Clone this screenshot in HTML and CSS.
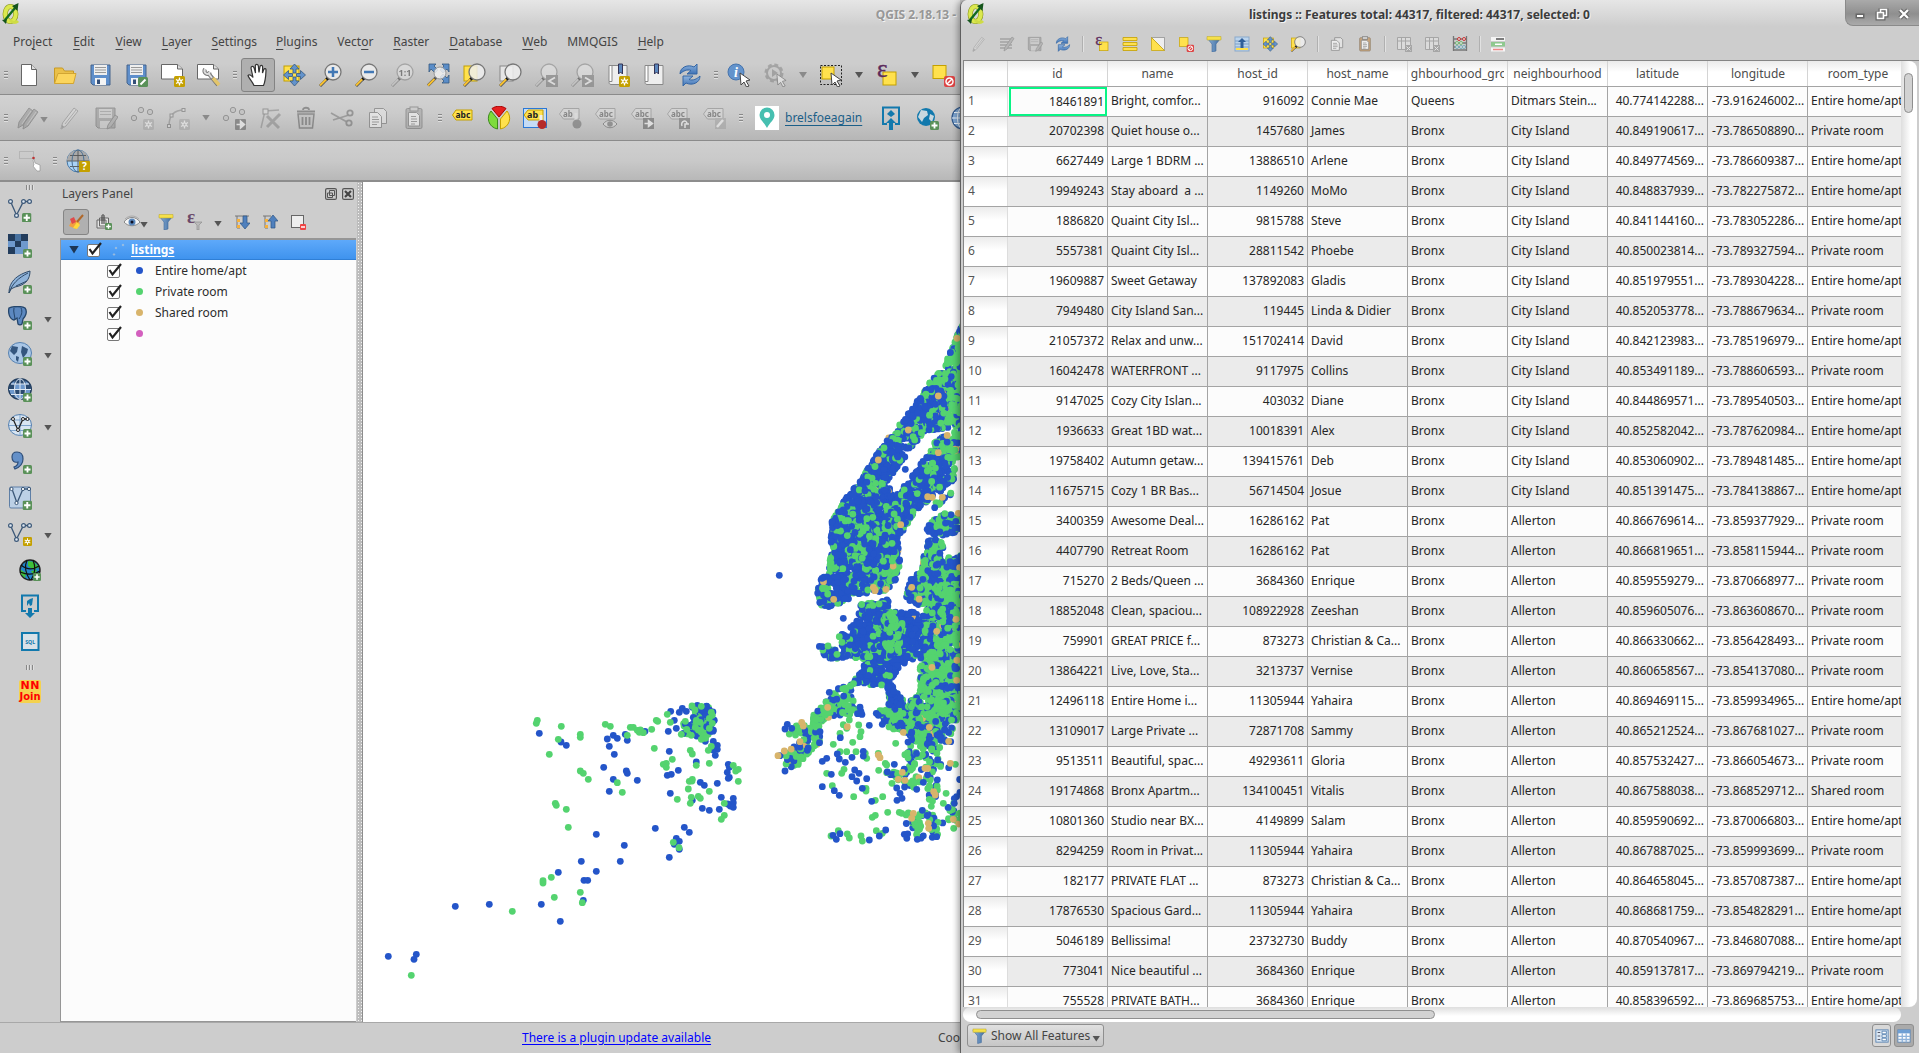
FILE: index.html
```html
<!DOCTYPE html>
<html lang="en">
<head>
<meta charset="utf-8">
<title>QGIS 2.18.13</title>
<link rel="stylesheet" href="styles.css">
</head>
<body>
<svg class="sprite" aria-hidden="true">
<defs>
<linearGradient id="gBlue" x1="0" y1="0" x2="0" y2="1"><stop offset="0" stop-color="#8fb4de"/><stop offset="1" stop-color="#3f72b5"/></linearGradient>
<linearGradient id="gFun" x1="0" y1="0" x2="1" y2="0"><stop offset="0" stop-color="#8ab0d8"/><stop offset="1" stop-color="#3c689c"/></linearGradient>
<symbol id="bplus" viewBox="0 0 9 9"><rect width="9" height="9" rx="1.5" fill="#5a9159"/><path d="M4.5 1.5v6M1.5 4.5h6" stroke="#fff" stroke-width="1.8"/></symbol>
<symbol id="bstar" viewBox="0 0 11 11"><rect width="11" height="11" rx="1.5" fill="#c4a000"/><path d="M5.500 1.500v8M2 3.500l7 4M9 3.500l-7 4" stroke="#fff" stroke-width="1.300"/><circle cx="5.500" cy="5.500" r="2.200" fill="#fff"/><circle cx="5.500" cy="5.500" r="1" fill="#c4a000"/></symbol>
<symbol id="lens" viewBox="0 0 24 24"><path d="M2 23l8-8" stroke="#555" stroke-width="3"/><path d="M2 22.500l6.500-6.500" stroke="#f7c02e" stroke-width="2"/><path d="M8.500 16.500l2-2" stroke="#111" stroke-width="3"/><circle cx="15" cy="9" r="8" fill="#eee" fill-opacity=".85" stroke="#777" stroke-width="1.300"/></symbol>
<symbol id="cursor" viewBox="0 0 12 15"><path d="M1 1l10 7-4 1 3 5-2.500 1-2.500-5-3 3z" fill="#fff" stroke="#444"/></symbol>
<symbol id="qgis" viewBox="0 0 18 22"><ellipse cx="8.500" cy="11" rx="5.300" ry="7.500" fill="none" stroke="#8d9a22" stroke-width="5.200"/><ellipse cx="8.500" cy="11" rx="5.300" ry="7.500" fill="none" stroke="#dbe84f" stroke-width="4"/><path d="M8 17c3 3 5 4 8 1" fill="none" stroke="#cfdc45" stroke-width="3"/><path d="M3 17L13 5" stroke="#126b20" stroke-width="2.400"/><path d="M16.500 0l-1 8-5.500-5zM0 17l5-1-1 5z" fill="#15551c"/></symbol>
<symbol id="new" viewBox="0 0 24 24"><path d="M4.500 1.500h10l5 5v16h-15z" fill="#fff" stroke="#666"/><path d="M14.500 1.500v5h5" fill="#ddd" stroke="#666"/></symbol>
<symbol id="open" viewBox="0 0 24 24"><path d="M1.500 20V5h8l2 3h9v12z" fill="#eac04a" stroke="#c79a25"/><path d="M1.500 20.500L5 10.500h18L20.500 20.500z" fill="#fbd55d" stroke="#d2a532"/></symbol>
<symbol id="save" viewBox="0 0 24 24"><path d="M2 2h19v20H4l-2-2z" fill="#5f8fcb" stroke="#46658c"/><rect x="5" y="2" width="13" height="10" fill="#eee"/><path d="M6 4.500h11M6 7h11M6 9.500h11" stroke="#999"/><rect x="6" y="15" width="11" height="7" fill="#f4f4f4"/><rect x="8" y="16.500" width="3" height="4.500" fill="#344f78"/></symbol>
<symbol id="saveas" viewBox="0 0 24 24"><use href="#save"/><rect x="13" y="14" width="10" height="10" rx="1.500" fill="#5a9159"/><path d="M15.500 21.500l5-5" stroke="#fff" stroke-width="2"/></symbol>
<symbol id="newcomp" viewBox="0 0 24 24"><path d="M.5 1.500h16l5 4.500v10H.5z" fill="#fff" stroke="#666"/><path d="M16.500 1.500v4.500h5" fill="#ddd" stroke="#666"/><use href="#bstar" x="13" y="13" width="11" height="11"/></symbol>
<symbol id="compman" viewBox="0 0 24 24"><path d="M.5 1.500h16l5 4.500v10H.5z" fill="#fff" stroke="#666"/><path d="M16.500 1.500v4.500h5" fill="#ddd" stroke="#666"/><path d="M8 6c-2 4 3 7 5 3M12 11l9 11" stroke="#777" stroke-width="4" fill="none"/><path d="M8 6c-2 4 3 7 5 3M12 11l3 4" stroke="#ddd" stroke-width="2" fill="none"/><path d="M16 15l6 7" stroke="#e3c56a" stroke-width="3.500"/></symbol>
<symbol id="pan" viewBox="0 0 24 24"><path d="M8 22.500C6 18 3 15.500 2 12.500c1-1.500 3-.5 5 2L5 5c0-2 2.400-2.200 3-.3L9.500 10 9.300 2.800c.2-2 2.600-2 3 0L13 9.500l1-6c.4-1.700 2.500-1.500 2.600.3L16.500 10l1.300-3.500c.6-1.500 2.300-1 2.200.5-.2 5-.2 10-2.500 15.500z" fill="#fff" stroke="#333" stroke-width="1.200"/></symbol>
<symbol id="pansel" viewBox="0 0 24 24"><rect x="2" y="3" width="15" height="15" fill="#ffe14d" stroke="#c4a000"/><g fill="#6393cc" stroke="#36597f" stroke-width=".8"><path d="M12.500 1l4.500 5h-3v4h-3V6H8zM12.500 23l4.500-5h-3v-4h-3v4H8zM1.500 12l5-4.500v3h4v3h-4v3zM23.500 12l-5-4.500v3h-4v3h4v3z"/></g></symbol>
<symbol id="zin" viewBox="0 0 24 24"><use href="#lens"/><path d="M15 4v10M10 9h10" stroke="#4278b5" stroke-width="2.500"/></symbol>
<symbol id="zout" viewBox="0 0 24 24"><use href="#lens"/><path d="M10 9h10" stroke="#4278b5" stroke-width="2.500"/></symbol>
<symbol id="z11" viewBox="0 0 24 24"><use href="#lens"/><text x="15" y="12.500" class="icon-text" font-size="9" text-anchor="middle" fill="#222">1:1</text></symbol>
<symbol id="zfull" viewBox="0 0 24 24"><path d="M3 1h7L8 3l4 4-3 3-4-4-2 3zM23 1h-7l2 2-4 4 3 3 4-4 2 3zM23 20h-7l2-2-4-4 3-3 4 4 2-3z" fill="#5a8dc8" stroke="#36597f" stroke-width=".8"/><path d="M2 22.500l8-8" stroke="#555" stroke-width="3"/><path d="M2 22.500l6.500-6.500" stroke="#f7c02e" stroke-width="2"/><circle cx="14" cy="10" r="6" fill="#eee" fill-opacity=".85" stroke="#999"/></symbol>
<symbol id="zsel" viewBox="0 0 24 24"><rect x="2" y="3" width="13" height="15" fill="#ffe14d" stroke="#c4a000"/><use href="#lens"/></symbol>
<symbol id="zlay" viewBox="0 0 24 24"><rect x="2" y="3" width="13" height="15" fill="#e5e5e5" stroke="#888"/><use href="#lens"/></symbol>
<symbol id="zlast" viewBox="0 0 24 24"><use href="#lens"/><rect x="12" y="12" width="12" height="12" fill="#666"/><path d="M21 14.500l-6 3.500 6 3.500" stroke="#fff" stroke-width="1.800" fill="none"/></symbol>
<symbol id="znext" viewBox="0 0 24 24"><use href="#lens"/><rect x="12" y="12" width="12" height="12" fill="#666"/><path d="M15 14.500l6 3.500-6 3.500" stroke="#fff" stroke-width="1.800" fill="none"/></symbol>
<symbol id="bookm" viewBox="0 0 24 24"><path d="M3 2.500h18v19H5c-2.500 0-2.500-3.500-.5-3.500" fill="#eee" stroke="#888"/><path d="M3 2.500h3v16H3z" fill="#fff" stroke="#888"/><path d="M12.500 1h4v10l-2-2-2 2z" fill="#5c87bd" stroke="#335"/></symbol>
<symbol id="booknew" viewBox="0 0 24 24"><use href="#bookm"/><use href="#bstar" x="13" y="13" width="11" height="11"/></symbol>
<symbol id="refresh" viewBox="0 0 24 24"><path d="M2 11C2 4 10 1 16 4l3-3v10H9l4-3.500C9 6 5 8 2 11z" fill="url(#gBlue)" stroke="#3466a5"/><path d="M22 13c0 7-8 10-14 7l-3 3V13h10l-4 3.500c4 1.500 8-.5 11-3.500z" fill="url(#gBlue)" stroke="#3466a5"/></symbol>
<symbol id="info" viewBox="0 0 24 24"><circle cx="9" cy="9" r="8" fill="#6393cc" stroke="#4674ad"/><text x="9" y="14" font-family="Liberation Serif, serif" font-weight="bold" font-style="italic" font-size="14" text-anchor="middle" fill="#fff">i</text><use href="#cursor" x="12" y="9" width="12" height="15"/></symbol>
<symbol id="gear" viewBox="0 0 24 24"><circle cx="11" cy="10" r="7.500" fill="none" stroke="#777" stroke-width="4" stroke-dasharray="3.500 2.400"/><circle cx="11" cy="10" r="7" fill="#ccc" stroke="#777" stroke-width="2"/><path d="M9 6l6 4-6 4z" fill="#777"/><use href="#cursor" x="13" y="10" width="11" height="14"/></symbol>
<symbol id="select" viewBox="0 0 24 24"><rect x="1.500" y="2.500" width="21" height="19" fill="none" stroke="#222" stroke-dasharray="2 1.500"/><rect x="3" y="4" width="12" height="12" fill="#ffe14d" stroke="#c4a000"/><use href="#cursor" x="10" y="9" width="14" height="15"/></symbol>
<symbol id="seleps" viewBox="0 0 24 24"><rect x="8" y="9" width="13" height="13" fill="#ffe14d" stroke="#c4a000"/><text x="2" y="14" font-family="Liberation Serif, serif" font-size="25" fill="#5b2a5b" stroke="#5b2a5b" stroke-width=".4">ε</text></symbol>
<symbol id="desel" viewBox="0 0 24 24"><rect x="2" y="2.500" width="13" height="13" fill="#ffe14d" stroke="#c4a000"/><rect x="13" y="13" width="11" height="11" rx="2" fill="#d44"/><circle cx="18.500" cy="18.500" r="3.500" fill="none" stroke="#fff" stroke-width="1.500"/><path d="M16 21l5-5" stroke="#fff" stroke-width="1.500"/></symbol>
<symbol id="pen" viewBox="0 0 24 24"><path d="M3 23l1.500-6L16 2l4 3L8 20z" fill="#ddd" stroke="#777"/><path d="M3 23l1-4 2 2zM7 18L18 4" fill="#666" stroke="#888"/></symbol>
<symbol id="pens" viewBox="0 0 24 24"><path d="M2 22l1-6L13 2l4 3L7 19zM7 23l1-6L18 3l4 3L12 20z" fill="#888" stroke="#555"/><path d="M6 18L15 5M11 19L20 6" stroke="#bbb"/></symbol>
<symbol id="savee" viewBox="0 0 24 24"><path d="M2 2h19v20H4l-2-2z" fill="#888" stroke="#555"/><rect x="5" y="3" width="13" height="9" fill="#ccc"/><path d="M6 5.500h11M6 8.500h11" stroke="#888"/><rect x="6" y="15" width="11" height="7" fill="#ccc"/><path d="M13 23l1-4 7-10 3 2-7 10z" fill="#999" stroke="#555"/></symbol>
<symbol id="pts" viewBox="0 0 24 24"><g fill="#bbb" stroke="#555"><circle cx="11" cy="4" r="2.700"/><circle cx="20" cy="6" r="2.700"/><circle cx="4" cy="12" r="2.700"/></g></symbol>
<symbol id="ptsn" viewBox="0 0 24 24"><use href="#pts"/><use href="#bstar" x="13" y="13" width="11" height="11"/></symbol>
<symbol id="ptsm" viewBox="0 0 24 24"><use href="#pts"/><rect x="13" y="13" width="11" height="11" rx="1" fill="#444"/><path d="M14.500 18.500h5M18.500 15l4 3.500-4 3.500z" stroke="#fff" fill="#fff" stroke-width="1.500"/></symbol>
<symbol id="curve" viewBox="0 0 24 24"><path d="M3 20C3 9 9 4 18 4" fill="none" stroke="#777" stroke-width="1.500"/><g fill="#ddd" stroke="#555"><rect x="1.500" y="18.500" width="3" height="3"/><rect x="4" y="8" width="3" height="3"/><rect x="16" y="2.500" width="3" height="3"/></g><use href="#bstar" x="13" y="13" width="11" height="11"/></symbol>
<symbol id="node" viewBox="0 0 24 24"><path d="M3 22L7 5l14-1" fill="none" stroke="#777" stroke-width="1.500"/><rect x="5" y="3" width="5" height="5" fill="#ddd" stroke="#555"/><path d="M9 10l12 12M22 8L9 21" stroke="#777" stroke-width="3"/></symbol>
<symbol id="trash" viewBox="0 0 24 24"><path d="M4 8h16l-1.500 14h-13z" fill="#bbb" stroke="#444" stroke-width="1.500"/><path d="M3 5.500h18M9 4c0-3 6-3 6 0M8.500 11v8M12 11v8M15.500 11v8" fill="none" stroke="#444" stroke-width="1.800"/></symbol>
<symbol id="cut" viewBox="0 0 24 24"><path d="M1 7l16 9M3 14l16-5" stroke="#666" stroke-width="1.800"/><circle cx="20" cy="7" r="2.700" fill="none" stroke="#555" stroke-width="1.800"/><circle cx="19" cy="17" r="2.700" fill="none" stroke="#555" stroke-width="1.800"/></symbol>
<symbol id="copy" viewBox="0 0 24 24"><path d="M8.500 2.500h9l3 3v12h-12z" fill="#eee" stroke="#555"/><path d="M3.500 6.500h8l4 4v11h-12z" fill="#fff" stroke="#555"/><path d="M6 11h6M6 13.500h7M6 16h7M6 18.500h5" stroke="#666"/></symbol>
<symbol id="paste" viewBox="0 0 24 24"><rect x="4" y="2.500" width="16" height="20" rx="1.500" fill="#c79256" stroke="#6a5030"/><rect x="8" y="1" width="8" height="4" fill="#ccc" stroke="#555"/><path d="M6.500 6.500h8l3 3v10.500h-11z" fill="#fff" stroke="#555"/><path d="M9 10.500h5M9 13h6M9 15.500h6M9 18h4" stroke="#666"/></symbol>
<symbol id="abc" viewBox="0 0 24 24"><path d="M1.500 9l3.500-5h16v10H5z" fill="#ffe14d" stroke="#c4a000"/><text x="4.500" y="12" class="icon-text" font-size="8.500" fill="#222">abc</text></symbol>
<symbol id="tg" viewBox="0 0 24 24"><path d="M.5 8l4-5.500h15.500v10.500H4.500z" fill="#ddd" stroke="#777"/><text x="4" y="10.500" class="icon-text" font-size="8" fill="#333">abc</text></symbol>
<symbol id="tgb" viewBox="0 0 24 24"><path d="M.5 8l4-5.500h15.500v10.500H4.500z" fill="#ddd" stroke="#777"/><text x="4" y="10.500" class="icon-text" font-size="8" fill="#333">ab</text></symbol>
<symbol id="pie" viewBox="0 0 24 24"><path d="M12 11L5 2.500c4-3 10-3 14 0z" fill="#e62020" stroke="#a00"/><path d="M10.500 13L4 5c-5 6-3 16 6.500 18z" fill="#7edb3c" stroke="#3d8a1e"/><path d="M13.500 13L20 5c5 6 3 16-6.500 18z" fill="#ffe14d" stroke="#c4a000"/></symbol>
<symbol id="abpin" viewBox="0 0 24 24"><rect x=".5" y="2.500" width="23" height="19" fill="#c6dcf5" stroke="#2a78d6"/><path d="M1 9l4-5h15v10H5z" fill="#ffe14d" stroke="#c4a000"/><text x="4" y="12" class="icon-text" font-size="9" fill="#222">ab</text><path d="M18 9v8" stroke="#eee" stroke-width="3"/><circle cx="19" cy="18.500" r="4.500" fill="#b52a2a"/></symbol>
<symbol id="t1" viewBox="0 0 24 24"><use href="#tgb"/><path d="M17 7v8" stroke="#eee" stroke-width="3"/><circle cx="18" cy="18" r="4.500" fill="#555"/></symbol>
<symbol id="t2" viewBox="0 0 24 24"><use href="#tg"/><path d="M8 18c4-5 10-5 14 0-4 5-10 5-14 0z" fill="#ddd" stroke="#444"/><circle cx="15" cy="18" r="2.800" fill="#555"/></symbol>
<symbol id="t3" viewBox="0 0 24 24"><use href="#tg"/><rect x="12" y="12" width="11" height="11" fill="#444"/><path d="M13.500 17.500h5M17.500 14.500l4 3-4 3z" stroke="#fff" fill="#fff" stroke-width="1.500"/></symbol>
<symbol id="t4" viewBox="0 0 24 24"><use href="#tg"/><rect x="12" y="12" width="11" height="11" fill="#555"/><path d="M15 20c-2-5 5-7 5-2M18 22v-4h4" stroke="#fff" fill="none" stroke-width="1.500"/></symbol>
<symbol id="t5" viewBox="0 0 24 24"><use href="#tg"/><rect x="12" y="12" width="11" height="11" fill="#999"/><path d="M14 21l6-7" stroke="#fff" stroke-width="2.500"/></symbol>
<symbol id="pin" viewBox="0 0 24 24"><rect width="24" height="24" fill="#fff"/><path d="M12 22C9 16 4.500 14 4.500 9a7.500 7.500 0 0115 0c0 5-4.500 7-7.500 13z" fill="#46bfb0"/><circle cx="12" cy="9" r="3" fill="#fff"/></symbol>
<symbol id="cup" viewBox="0 0 24 24"><path d="M8 18H4V1.500h16V18h-4" fill="none" stroke="#1279ad" stroke-width="2"/><path d="M12 12l5 5h-3v7h-4v-7H7zM12 4l4 4-4 3-4-3z" fill="#1279ad"/></symbol>
<symbol id="cglobe" viewBox="0 0 24 24"><circle cx="11" cy="11" r="9" fill="#1279ad"/><path d="M6 4l6 1 1 4-4 3-2 4-4-5zM15 8l4 2-2 6-3-3z" fill="#c9d8df"/><use href="#bplus" x="15" y="15" width="9" height="9"/></symbol>
<symbol id="globe" viewBox="0 0 24 24"><circle cx="12" cy="12" r="11" fill="#7ea4cf" stroke="#31588a" stroke-width="1.200"/><path d="M12 1v22M1 12h22M3 6.500h18M3 17.500h18" stroke="#eaf2fa" fill="none"/><ellipse cx="12" cy="12" rx="5.500" ry="11" fill="none" stroke="#eaf2fa"/></symbol>
<symbol id="helpg" viewBox="0 0 24 24"><circle cx="12" cy="12" r="11" fill="#aad3f5" stroke="#4678a8"/><path d="M1 12a11 11 0 0122 0z" fill="#aaa"/><path d="M12 1v22M1 12h22M4 6.500h16M4 17.500h16" stroke="#555" stroke-width=".9"/><ellipse cx="12" cy="12" rx="6" ry="11" fill="none" stroke="#4a6f92"/><rect x="13" y="12" width="11" height="11" rx="1" fill="#c4a000"/><text x="18.500" y="21" font-size="10" class="icon-text" text-anchor="middle" fill="#fff">?</text></symbol>
<symbol id="annot" viewBox="0 0 24 24"><rect x="2.500" y="2.500" width="14" height="7" fill="none" stroke="#b5b5b5"/><circle cx="16.500" cy="9" r="1.300" fill="#b33"/><path d="M16 11l1 5-1 1 4 5h3v-6l-5-2-1-4z" fill="#fff" stroke="#888" stroke-width=".6"/></symbol>
<symbol id="vec" viewBox="0 0 24 24"><path d="M2.500 3.500L8.500 17 15.500 3.500H22" fill="none" stroke="#3c5878" stroke-width="1.300"/><g fill="#dfe8f2" stroke="#3c5878" stroke-width="1.200"><circle cx="2.500" cy="3.500" r="1.900"/><circle cx="8.500" cy="17.500" r="1.900"/><circle cx="15.500" cy="3.500" r="1.900"/><circle cx="21.500" cy="3.500" r="1.900"/></g></symbol>
<symbol id="vadd" viewBox="0 0 24 24"><use href="#vec"/><use href="#bplus" x="14" y="15" width="9.500" height="9.500"/></symbol>
<symbol id="vnew" viewBox="0 0 24 24"><use href="#vec"/><use href="#bstar" x="15" y="15" width="9" height="9"/></symbol>
<symbol id="ras" viewBox="0 0 24 24"><path d="M0 0h20v20H0z" fill="#6e99cd"/><path d="M0 0h7v7H0zM13 0h7v7h-7zM7 7h6v6H7zM0 13h7v7H0z" fill="#223c5c"/><path d="M7 0h6v7H7z" fill="#47719f"/><use href="#bplus" x="15" y="15" width="9" height="9"/></symbol>
<symbol id="feather" viewBox="0 0 24 24"><path d="M1 23c0-7 3-17 21-22 0 8-4 14-15 16L3 19z" fill="#8fb3da" stroke="#2f4a68"/><path d="M1 23C4 14 10 8 20 3M8 16l11-5" fill="none" stroke="#2f4a68"/><use href="#bplus" x="15" y="15" width="9" height="9"/></symbol>
<symbol id="pg" viewBox="0 0 24 24"><path d="M1 2c4-2 13-2 16 0 3 4 0 9-2 11l-1 5c-1 1-3 1-4 0l-1-6-3 2C1 13 0 6 1 2z" fill="#5c88c0" stroke="#24456b" stroke-width="1.300"/><path d="M6 2c-1 4 1 8 1 12M13 2c2 4 0 8-2 11" fill="none" stroke="#24456b"/><use href="#bplus" x="15" y="15" width="9" height="9"/></symbol>
<symbol id="wms" viewBox="0 0 24 24"><ellipse cx="12" cy="11" rx="11.500" ry="10.500" fill="#a9c6e6" stroke="#5580b0"/><path d="M4 4l6 1-1 5-3 3-4-4zM14 4l6 3-1 4-4 5-2-6zM8 14l3 1-1 5-2-2z" fill="#34567f"/><use href="#bplus" x="15" y="15" width="9" height="9"/></symbol>
<symbol id="wcs" viewBox="0 0 24 24"><ellipse cx="12" cy="11" rx="11.300" ry="10.300" fill="#6e99cd" stroke="#223c5c" stroke-width="1.400"/><path d="M1.500 6.500H6.500V11H1zM6.500 1.800h11v4.700h-11zM17.500 6.500h5V11h-5zM6.500 11h11v5.500h-11zM3 16.500h3.500v3z" fill="#2a4a70"/><path d="M8 6h8v5H8zM1 11h5v5H3z" fill="#6e99cd"/><path d="M12 1v21M1 11.500h22M3 6h18M3 16.500h18" stroke="#dfe9f4"/><ellipse cx="12" cy="11" rx="5.500" ry="10.300" fill="none" stroke="#dfe9f4"/><use href="#bplus" x="15" y="15" width="9" height="9"/></symbol>
<symbol id="wfs" viewBox="0 0 24 24"><ellipse cx="12" cy="11" rx="11.500" ry="10.500" fill="#d8e5f2" stroke="#5580b0"/><path d="M12 1v21M1 11.500h22M3 6h18M3 16.500h18" stroke="#7fa4cd"/><path d="M5 5l5 11 5-11h5" fill="none" stroke="#222" stroke-width="1.300"/><g fill="#fff" stroke="#222"><circle cx="5" cy="5" r="1.500"/><circle cx="10" cy="16" r="1.500"/><circle cx="15" cy="5" r="1.500"/><circle cx="19.500" cy="5" r="1.500"/></g><use href="#bplus" x="15" y="15" width="9" height="9"/></symbol>
<symbol id="comma" viewBox="0 0 24 24"><path d="M9 2c4 0 6 3 6 7 0 5-3 8-8 10l-1-2c3-1 4-3 4-5-4 1-6-1-6-5 0-3 2-5 5-5z" fill="#6490c8" stroke="#2f4f7a" stroke-width="1.200"/><use href="#bplus" x="15" y="15" width="9" height="9"/></symbol>
<symbol id="virt" viewBox="0 0 24 24"><rect x="1.500" y="1" width="21" height="21" rx="1.500" fill="#bcd0e6" stroke="#5e7fa6"/><path d="M4 3l5 14 6-14h7" fill="none" stroke="#3c5878" stroke-width="1.300"/><g fill="#fff" stroke="#3c5878"><circle cx="3.500" cy="3" r="1.600"/><circle cx="8.500" cy="17" r="1.600"/><circle cx="15" cy="3" r="1.600"/><circle cx="21" cy="3" r="1.600"/></g><use href="#bplus" x="14.500" y="14.500" width="9.500" height="9.500"/></symbol>
<symbol id="olayer" viewBox="0 0 24 24"><circle cx="12" cy="12" r="10" fill="#2386c9" stroke="#222" stroke-width="1.500"/><path d="M10 3l6 1 5 5-5 3-6-4zM3 12l5 3-1 5-4-4zM13 13l6-1-3 6z" fill="#3fbf38"/><path d="M3 7c6 5 12 5 18 1M2 14c7 3 14 3 20-1M9 2c-3 7-1 14 3 20M15 2c3 7 2 14-2 20" stroke="#111" stroke-width="1.200" fill="none"/><use href="#bplus" x="15" y="15" width="8" height="8"/></symbol>
<symbol id="cdown" viewBox="0 0 24 24"><path d="M8 17H4V1.500h16V17h-4" fill="none" stroke="#1279ad" stroke-width="2"/><path d="M12 24l5-5h-3v-5h-4v5H7zM9 12V7l3-2 3-1-1 7-2 1-1-3z" fill="#1279ad"/></symbol>
<symbol id="sql" viewBox="0 0 24 24"><rect x="4" y="3" width="16.500" height="17" fill="#d9e2e8" stroke="#1279ad" stroke-width="2"/><text x="12.200" y="13.800" class="icon-text" font-size="6" textLength="10" lengthAdjust="spacingAndGlyphs" text-anchor="middle" fill="#1279ad">SQL</text></symbol>
<symbol id="nn" viewBox="0 0 24 24"><rect x="1" y="1" width="22" height="23" rx="2" fill="#f4d24f"/><text x="12" y="10" class="icon-text nn-text" font-size="11" textLength="19" text-anchor="middle" fill="#f00">NN</text><text x="12" y="21" class="icon-text nn-text" font-size="10" textLength="21" lengthAdjust="spacingAndGlyphs" text-anchor="middle" fill="#f00">Join</text></symbol>
<symbol id="brush" viewBox="0 0 16 16"><path d="M1 12L5 4l7 5-4 6z" fill="#f0a040"/><path d="M2 5l4-2 2 5-4 2z" fill="#e04a4a"/><path d="M5 14l4-6 3 3-3 4z" fill="#ffd93a"/><path d="M9 8l6-7" stroke="#b0682a" stroke-width="2"/></symbol>
<symbol id="addg" viewBox="0 0 16 16"><path d="M1 6h9v8H1zM3.500 4h9v8h-9z" fill="#e5e5e5" stroke="#666"/><path d="M6 10V1.500c0-1 2-1 2 0V10" fill="none" stroke="#333"/><use href="#bplus" x="9" y="9" width="7" height="7"/></symbol>
<symbol id="eye" viewBox="0 0 16 16"><path d="M0 8c4-6 12-6 16 0-4 5-12 5-16 0z" fill="#f5f5f5" stroke="#888"/><path d="M1 5c4-4 10-4 14 0" stroke="#aaa" fill="none"/><circle cx="8" cy="8" r="3.500" fill="#5a88bd"/><circle cx="8" cy="8" r="1.500" fill="#112"/></symbol>
<symbol id="funnel" viewBox="0 0 16 16"><path d="M1 2h14l-5 6v7l-4 1V8z" fill="url(#gFun)" stroke="#3c689c" stroke-width=".6"/><path d="M1 .5h14V4H1z" fill="#f5e04a" stroke="#b9a526" stroke-width=".5"/></symbol>
<symbol id="epsf" viewBox="0 0 16 16"><text x="0" y="9" font-family="Liberation Serif, serif" font-size="19" font-weight="bold" fill="#6b4a6b">ε</text><path d="M7 8h8l-3 3v5h-2v-5z" fill="#bbb" stroke="#888" stroke-width=".6"/></symbol>
<symbol id="expand" viewBox="0 0 16 16"><path d="M1 2h14M3 2v12h3M3 7h3" stroke="#777" fill="none"/><path d="M3 5h3v3H3zM3 11h3v3H3z" fill="#f5b03a"/><path d="M9 2h4v7h3l-5 6-5-6h3z" fill="#4f80bd" stroke="#2c5484" stroke-width=".7"/></symbol>
<symbol id="collapse" viewBox="0 0 16 16"><path d="M1 2h8M3 2v12h3M3 7h3" stroke="#777" fill="none"/><path d="M3 5h3v3H3zM3 11h3v3H3z" fill="#f5b03a"/><path d="M9 14h4V7h3l-5-6-5 6h3z" fill="#4f80bd" stroke="#2c5484" stroke-width=".7"/></symbol>
<symbol id="remove" viewBox="0 0 16 16"><rect x="1.500" y="1.500" width="12" height="12" fill="#eee" stroke="#666"/><rect x="10" y="10" width="6" height="6" rx="1" fill="#e44"/><path d="M11 13h4" stroke="#fff" stroke-width="1.500"/></symbol>
<symbol id="check" viewBox="0 0 16 16"><rect x="1.500" y="3.500" width="12" height="12" rx="1.500" fill="#fff" stroke="#777"/><path d="M3.500 8l3 4.500L15 2" fill="none" stroke="#222" stroke-width="2.200"/></symbol>
<symbol id="tedit" viewBox="0 0 16 16"><path d="M1 3h12M1 6h12M1 9h12M1 12h12" stroke="#888" stroke-width="1.800"/><path d="M5 15l1-4 7-10 2 1.500L8 13z" fill="#999" stroke="#555" stroke-width=".7"/></symbol>
<symbol id="selall" viewBox="0 0 16 16"><path d="M1 1.500h14v3H1zM1 6.500h14v3H1zM1 11.500h14v3H1z" fill="#ffe14d" stroke="#c4a000" stroke-width=".8"/></symbol>
<symbol id="inv" viewBox="0 0 16 16"><path d="M1.500 1.500h13v13z" fill="#eee" stroke="#888" stroke-width=".7"/><path d="M1.500 1.500v13h13z" fill="#ffe14d" stroke="#c4a000" stroke-width=".7"/></symbol>
<symbol id="top" viewBox="0 0 16 16"><rect x="1" y="1" width="14" height="14" fill="#bcd4ec" stroke="#8aa9cb"/><path d="M1 5h14M1 8h14M1 11h14" stroke="#7d9fc6"/><path d="M2 12h12v2H2z" fill="#ffe14d"/><path d="M8 2l4 4H9.500v6h-3V6H4z" fill="#2f5f99"/></symbol>
<symbol id="col" viewBox="0 0 16 16"><path d="M1.500 1.500h13v12h-13zM1.500 5h13M5.500 1.500v12M9.500 1.500v12" fill="#eee" stroke="#777"/><rect x="9" y="9" width="7" height="7" fill="#777"/><path d="M10.500 10.500l4 4M14.500 10.500l-4 4" stroke="#fff"/></symbol>
<symbol id="abacus" viewBox="0 0 16 16"><path d="M1.500 0v15M14.500 0v15M1 14h14M1 3h14M1 7h14M1 11h14" stroke="#777" stroke-width="1.300"/><g stroke-width="1" fill="#ddd"><g stroke="#c33"><circle cx="7" cy="3" r="1.500"/><circle cx="12" cy="3" r="1.500"/></g><g stroke="#7b7"><circle cx="5" cy="7" r="1.500"/><circle cx="9" cy="7" r="1.500"/></g><g stroke="#7ab"><circle cx="5" cy="11" r="1.500"/><circle cx="9" cy="11" r="1.500"/><circle cx="12" cy="11" r="1.500"/></g></g></symbol>
<symbol id="cond" viewBox="0 0 16 16"><path d="M1 1h14v4H1z" fill="#f5f5f5"/><path d="M6 3h8" stroke="#555" stroke-width="1.500"/><path d="M1 6h14v4.500H1z" fill="#8fc98f"/><path d="M5 8.300h7" stroke="#fff" stroke-width="1.500"/><path d="M1 11.500h14v4H1z" fill="#f5f5f5"/><path d="M3 13.500h10" stroke="#e88" stroke-width="1.500"/></symbol>
<symbol id="form" viewBox="0 0 16 16"><rect x="1" y="1" width="14" height="14" fill="#dce8f4" stroke="#5580b0"/><path d="M3 4h3M3 8h3M3 12h3" stroke="#445"/><path d="M8 2.500h5v3H8zM8 6.500h5v3H8zM8 10.500h5v3H8z" fill="#fff" stroke="#5580b0"/></symbol>
<symbol id="tbl" viewBox="0 0 16 16"><rect x="1" y="1" width="14" height="14" fill="#fff" stroke="#5580b0"/><path d="M1 1h14v4H1z" fill="#6e9fd4"/><path d="M1 8.500h14M1 12h14M6 5v10M10.500 5v10" stroke="#8fb3da" stroke-width="1.500"/></symbol>
<symbol id="floatw" viewBox="0 0 12 12"><rect x=".6" y=".6" width="10.800" height="10.800" rx="1.500" fill="none" stroke="#555" stroke-width="1.200"/><path d="M4.500 2.500h5v5h-5zM2.500 5h5v4.500h-5z" fill="#cdcdcd" stroke="#555"/></symbol>
<symbol id="closew" viewBox="0 0 12 12"><rect x=".6" y=".6" width="10.800" height="10.800" rx="1.500" fill="none" stroke="#555" stroke-width="1.200"/><path d="M3 3l6 6M9 3l-6 6" stroke="#444" stroke-width="2.200"/></symbol>
</defs>
</svg>

<div class="desktop">
<main class="main-window">
  <header class="titlebar"><svg class="logo"><use href="#qgis"/></svg><span class="title inactive">QGIS 2.18.13 -</span></header>
  <nav class="menu">
    <span>Pro<u>j</u>ect</span><span><u>E</u>dit</span><span><u>V</u>iew</span><span><u>L</u>ayer</span><span><u>S</u>ettings</span><span><u>P</u>lugins</span><span>Vect<u>o</u>r</span><span><u>R</u>aster</span><span><u>D</u>atabase</span><span><u>W</u>eb</span><span>MMQGIS</span><span><u>H</u>elp</span>
  </nav>
  <div class="toolbar first">
    <i class="grip lead"></i>
    <svg class="t"><use href="#new"/></svg><svg class="t"><use href="#open"/></svg><svg class="t"><use href="#save"/></svg><svg class="t"><use href="#saveas"/></svg><svg class="t"><use href="#newcomp"/></svg><svg class="t"><use href="#compman"/></svg>
    <i class="grip"></i>
    <span class="pressed"><svg class="t"><use href="#pan"/></svg></span><svg class="t"><use href="#pansel"/></svg><svg class="t"><use href="#zin"/></svg><svg class="t"><use href="#zout"/></svg><svg class="t off"><use href="#z11"/></svg><svg class="t"><use href="#zfull"/></svg><svg class="t"><use href="#zsel"/></svg><svg class="t"><use href="#zlay"/></svg><svg class="t off"><use href="#zlast"/></svg><svg class="t off"><use href="#znext"/></svg><svg class="t"><use href="#booknew"/></svg><svg class="t"><use href="#bookm"/></svg><svg class="t"><use href="#refresh"/></svg>
    <i class="grip"></i>
    <svg class="t"><use href="#info"/></svg><svg class="t off"><use href="#gear"/></svg><i class="arr dim"></i><svg class="t"><use href="#select"/></svg><i class="arr"></i><svg class="t"><use href="#seleps"/></svg><i class="arr"></i><svg class="t"><use href="#desel"/></svg>
  </div>
  <div class="toolbar second">
    <i class="grip lead"></i>
    <svg class="t narrow off"><use href="#pens"/></svg><i class="arr tuck dim"></i><svg class="t off"><use href="#pen"/></svg><svg class="t off"><use href="#savee"/></svg><svg class="t off"><use href="#ptsn"/></svg><svg class="t off"><use href="#curve"/></svg><i class="arr dim"></i><svg class="t off"><use href="#ptsm"/></svg><svg class="t off"><use href="#node"/></svg><svg class="t off"><use href="#trash"/></svg><svg class="t off"><use href="#cut"/></svg><svg class="t off"><use href="#copy"/></svg><svg class="t off"><use href="#paste"/></svg>
    <i class="grip tight"></i>
    <svg class="t"><use href="#abc"/></svg><svg class="t"><use href="#pie"/></svg><svg class="t"><use href="#abpin"/></svg><svg class="t off"><use href="#t1"/></svg><svg class="t off"><use href="#t2"/></svg><svg class="t off"><use href="#t3"/></svg><svg class="t off"><use href="#t4"/></svg><svg class="t off"><use href="#t5"/></svg>
    <i class="grip"></i>
    <svg class="t"><use href="#pin"/></svg><a class="user">brelsfoeagain</a><svg class="t"><use href="#cup"/></svg><svg class="t"><use href="#cglobe"/></svg><svg class="t"><use href="#globe"/></svg>
  </div>
  <div class="toolbar third">
    <i class="grip lead"></i><svg class="t"><use href="#annot"/></svg><i class="grip"></i><svg class="t"><use href="#helpg"/></svg>
  </div>
  <div class="workspace">
    <aside class="side-tools">
      <i class="grip-h"></i>
      <div class="st"><svg class="s"><use href="#vadd"/></svg></div>
      <div class="st"><svg class="s"><use href="#ras"/></svg></div>
      <div class="st"><svg class="s"><use href="#feather"/></svg></div>
      <div class="st"><svg class="s"><use href="#pg"/></svg><i class="arr"></i></div>
      <div class="st"><svg class="s"><use href="#wms"/></svg><i class="arr"></i></div>
      <div class="st"><svg class="s"><use href="#wcs"/></svg></div>
      <div class="st"><svg class="s"><use href="#wfs"/></svg><i class="arr"></i></div>
      <div class="st"><svg class="s"><use href="#comma"/></svg></div>
      <div class="st"><svg class="s"><use href="#virt"/></svg></div>
      <div class="st"><svg class="s"><use href="#vnew"/></svg><i class="arr"></i></div>
      <div class="st mid"><svg class="s"><use href="#olayer"/></svg></div>
      <div class="st mid"><svg class="s"><use href="#cdown"/></svg></div>
      <div class="st mid"><svg class="s"><use href="#sql"/></svg></div>
      <i class="grip-h low"></i>
      <div class="st mid"><svg class="s"><use href="#nn"/></svg></div>
    </aside>
    <section class="layers">
      <div class="panel-title"><span>Layers Panel</span><svg><use href="#floatw"/></svg><svg><use href="#closew"/></svg></div>
      <div class="panel-tools">
        <span class="pbtn"><svg><use href="#brush"/></svg></span><svg><use href="#addg"/></svg><svg class="eye"><use href="#eye"/></svg><i class="arr"></i><svg class="fun"><use href="#funnel"/></svg><svg class="eps"><use href="#epsf"/></svg><i class="arr after-eps"></i><svg><use href="#expand"/></svg><svg><use href="#collapse"/></svg><svg><use href="#remove"/></svg>
      </div>
      <div class="tree">
        <div class="row selected"><i class="twist"></i><svg class="cb"><use href="#check"/></svg><svg class="mini" viewBox="0 0 14 14"><g fill="#7fa9d4" stroke="#c9d4de" stroke-width=".5"><circle cx="2" cy="11.500" r=".8"/><circle cx="4" cy="5" r=".8"/><circle cx="11" cy="2" r=".8"/></g></svg><b>listings</b></div>
        <div class="row"><svg class="cb"><use href="#check"/></svg><i class="dot blue"></i><span>Entire home/apt</span></div>
        <div class="row"><svg class="cb"><use href="#check"/></svg><i class="dot green"></i><span>Private room</span></div>
        <div class="row"><svg class="cb"><use href="#check"/></svg><i class="dot tan"></i><span>Shared room</span></div>
        <div class="row"><svg class="cb"><use href="#check"/></svg><i class="dot pink"></i></div>
      </div>
    </section>
    <div class="splitter"></div>
    <section class="map"><svg id="map" viewBox="364 182 596 840"></svg></section>
  </div>
  <footer class="status"><a>There is a plugin update available</a><span>Coo</span></footer>
</main>

<section class="table-window">
  <header class="titlebar"><svg class="logo"><use href="#qgis"/></svg><span class="title">listings :: Features total: 44317, filtered: 44317, selected: 0</span>
    <div class="controls"><svg viewBox="0 0 74 26"><g fill="#666" stroke="#666" stroke-width="3"><path d="M11 15h6v2h-6z"/><path d="M34 10h7v6h-7zM31 13h7v6h-7z"/></g><path d="M54 10l8 8M62 10l-8 8" stroke="#666" stroke-width="4.500"/><path d="M11 15h6v2h-6z" fill="#fff"/><path d="M34.500 9.500h6v6h-6z" fill="none" stroke="#fff" stroke-width="1.600"/><path d="M31.500 12.500h6v6h-6z" fill="#888" stroke="#fff" stroke-width="1.600"/><path d="M54 10l8 8M62 10l-8 8" stroke="#fff" stroke-width="2.300"/></svg></div>
  </header>
  <div class="attr-tools">
    <svg class="off"><use href="#pen"/></svg><svg class="off"><use href="#tedit"/></svg><svg class="off"><use href="#savee"/></svg><svg><use href="#refresh"/></svg><i class="sep"></i>
    <svg><use href="#seleps"/></svg><svg><use href="#selall"/></svg><svg><use href="#inv"/></svg><svg><use href="#desel"/></svg><svg><use href="#funnel"/></svg><svg><use href="#top"/></svg><svg><use href="#pansel"/></svg><svg><use href="#zsel"/></svg><i class="sep"></i>
    <svg class="half"><use href="#copy"/></svg><svg class="half"><use href="#paste"/></svg><i class="sep"></i>
    <svg class="off"><use href="#col"/></svg><svg class="off"><use href="#col"/></svg><svg><use href="#abacus"/></svg><i class="sep last"></i><svg><use href="#cond"/></svg>
  </div>
  <div class="grid-frame">
    <div class="grid" id="grid"></div>
    <div class="vbar"><i></i></div>
  </div>
  <div class="hbar"><i></i></div>
  <footer class="attr-foot">
    <span class="filter-btn"><svg><use href="#funnel"/></svg>Show All Features<i class="arr"></i></span>
    <span class="view-btn"><svg><use href="#form"/></svg></span><span class="view-btn on"><svg><use href="#tbl"/></svg></span>
  </footer>
</section>
</div>
<script src="app.js"></script>
</body>
</html>
```
FILE: styles.css
```css
* { box-sizing: border-box; }
body { margin: 0; width: 1919px; height: 1053px; overflow: hidden; background: #cdcdcd; font-family: "Noto Sans", sans-serif; font-size: 12px; line-height: 16px; color: #444; }
.sprite { position: absolute; width: 0; height: 0; }
.desktop { display: grid; grid-template-columns: 960px 959px; height: 1053px; }
.icon-text { font-family: "Noto Sans", sans-serif; font-weight: bold; }
.nn-text { font-family: "DejaVu Sans", sans-serif; }
svg { display: block; flex: none; }
i { font-style: normal; display: block; flex: none; }

.main-window { display: flex; flex-direction: column; min-width: 0; height: 1053px; overflow: hidden; }
.titlebar { height: 28px; flex: none; display: flex; align-items: center; background: linear-gradient(#e6e6e6, #cdcdcd 95%); }
.logo { width: 18px; height: 22px; margin-left: 2px; }
.title { font-weight: bold; font-size: 12px; text-shadow: 1px 1px 0 #f4f4f4; color: #3c3c3c; white-space: nowrap; letter-spacing: -.03px; padding-top: 1px; }
.title.inactive { color: #979797; margin-left: auto; margin-right: 4px; }
.menu { height: 28px; flex: none; display: flex; align-items: center; padding: 0 0 1px 13px; gap: 19.900px; }
.menu span:nth-child(-n+2) { margin-right: 1px; }
.menu span:nth-child(4), .menu span:nth-child(5) { margin-right: -1px; }
.menu u { text-underline-offset: 3px; }

.toolbar { flex: none; display: flex; align-items: center; overflow: hidden; border-bottom: 1px solid #8b8b8b; background: linear-gradient(#cdcdcd 20%, #b8b8b8); }
.first { height: 39px; }
.second { height: 46px; background: linear-gradient(#d2d2d2, #cbcbcb 40%, #b6b6b6); }
.third { height: 41px; border-bottom: 2px solid #8d8d8d; background: linear-gradient(#cfcfcf, #c9c9c9 50%, #b8b8b8); }
.t { width: 36px; height: 24px; padding: 0 6px; }
.t.narrow { width: 34px; padding: 0 5px; }
.off { filter: grayscale(1); opacity: .45; }
.half { opacity: .65; }
.grip { width: 16px; height: 8px; background: repeating-linear-gradient(#888 0 1px, #e0e0e0 1px 2px, transparent 2px 3px) center / 4px 8px no-repeat; }
.first .grip, .third .grip { width: 13px; background-position: 6px center; }
.toolbar .grip.lead { width: 11px; background-position: center; }
.grip.tight { margin-right: -3px; }
.pressed { width: 34px; height: 34px; margin: 0 1px; border: 1px solid #838383; border-radius: 3px; background: #afafaf; display: flex; align-items: center; justify-content: center; }
.arr { width: 20px; height: 6px; background: #555; clip-path: polygon(6px 0, 14px 0, 10px 6px); }
.arr.dim { background: #8a8a8a; }
.arr.tuck { margin: 4px -2px 0 -11px; }
.user { color: #1c5f88; text-decoration: underline; text-underline-offset: 3px; width: 88px; white-space: nowrap; flex: none; }

.workspace { flex: 1; min-height: 0; display: grid; grid-template-columns: 60px 297px 6px 597px; }
.side-tools { display: flex; flex-direction: column; padding-top: 2px; }
.grip-h { height: 5px; width: 8px; margin: 1px 0 2px 26px; background: repeating-linear-gradient(90deg, #888 0 1px, #e0e0e0 1px 2px, transparent 2px 3px); }
.grip-h.low { margin: 5px 0 3px 26px; }
.st { height: 36px; display: flex; align-items: center; padding-left: 8px; }
.st.mid { padding-left: 18px; }
.s { width: 24px; height: 24px; }
.st .arr { margin-left: 6px; margin-top: 3px; }
.layers { display: flex; flex-direction: column; min-width: 0; }
.panel-title { height: 24px; display: flex; align-items: center; gap: 5px; padding: 0 3px 0 2px; }
.panel-title span { flex: 1; }
.panel-title svg { width: 12px; height: 12px; }
.panel-tools { height: 32px; display: flex; align-items: center; padding-left: 3px; gap: 12px; }
.panel-tools svg { width: 16px; height: 16px; }
.pbtn { width: 26px; height: 26px; border: 1px solid #858585; border-radius: 3px; background: #b0b0b0; display: grid; place-items: center; margin-right: -5px; }
.eye + .arr { margin: 5px -8px 0 -18px; }
.panel-tools .fun { margin-left: 0; }
.panel-tools .eps { margin-left: 1px; }
.panel-tools .after-eps { margin: 3px -6px 0 -7px; }
.tree { flex: 1; border: 1px solid #969696; border-top-width: 2px; border-right: 0; background: #fcfcfc; color: #2c2c2c; margin-right: 1px; }
.row { height: 21px; display: flex; align-items: center; padding-left: 45px; }
.cb { width: 16px; height: 16px; margin-top: -2px; }
.dot { width: 7px; height: 7px; border-radius: 50%; margin: -1px 12.500px 0 13.500px; }
.blue { background: #2455c9; } .green { background: #54d36f; } .tan { background: #d8b46b; } .pink { background: #d35fbe; }
.row.selected { height: 20px; padding-left: 8px; background: linear-gradient(#5ea9fa, #3f93ee); border-bottom: 1px solid #2f7fd6; color: #fff; }
.row b { text-decoration: underline; text-underline-offset: 2px; }
.twist { width: 10px; height: 8px; background: #1d3654; clip-path: polygon(0 0, 100% 0, 50% 100%); margin-right: 7px; }
.mini { width: 14px; height: 14px; margin: 0 5px 0 10px; }
.splitter { border-right: 1px solid #8d8d8d; background: radial-gradient(circle, #f4f4f4 .7px, #bcbcbc 1px) 0 0 / 3px 3px; }
.map { background: #fff; overflow: hidden; padding-left: 1px; }
.map svg { width: 596px; height: 840px; }
.status { height: 31px; flex: none; border-top: 1px solid #a8a8a8; display: flex; align-items: center; padding-left: 522px; justify-content: space-between; }
.status a { color: #00f; text-decoration: underline; text-underline-offset: 2px; }

.table-window { display: flex; flex-direction: column; height: 1053px; border-left: 1px solid #5f5f5f; border-radius: 7px 0 0 0; background: #cdcdcd; box-shadow: -2px 0 6px rgba(0,0,0,.35); position: relative; overflow: hidden; clip-path: inset(0 0 0 -8px); }
.table-window .logo { margin-left: 6px; }
.table-window .title { margin: 0 auto 0 264px; }
.controls { width: 74px; height: 26px; align-self: flex-start; border: 1px solid #8a8a8a; border-width: 0 0 1px 1px; border-radius: 0 0 0 8px; background: linear-gradient(#aaa, #8f8f8f 55%, #aaa); }
.controls svg { width: 74px; height: 26px; }
.attr-tools { height: 32px; flex: none; display: flex; align-items: center; padding-left: 4px; }
.attr-tools svg { width: 28px; height: 16px; padding: 0 6px; }
.sep { width: 11px; height: 16px; background: linear-gradient(90deg, #b0b0b0 50%, #e2e2e2 50%) center / 2px 16px no-repeat; }
.sep.last { margin-right: -1px; }
.grid-frame { height: 947px; flex: none; margin-left: 2px; border-top: 1px solid #858585; border-left: 1px solid #858585; display: flex; }
.grid { width: 937px; height: 946px; overflow: hidden; background: #fcfcfc; color: #262626; }
.r { display: grid; grid-template-columns: 44px repeat(9, 100px); height: 30px; width: 944px; border-bottom: 1px solid #a4a4a4; line-height: 28px; }
.r.alt { background: #ebebeb; }
.r > div { border-right: 1px solid #a4a4a4; padding: 0 3px 0 3px; white-space: nowrap; overflow: hidden; }
.r > div:nth-child(9) { padding-left: 4px; }
.r > .num { text-align: right; padding-right: 3px; }
.r > .vh { border-right: 1px solid #ddd; color: #555; background: linear-gradient(#ebebeb, #fff 45%); padding-left: 4px; }
.r > .cur { border: 2px solid #08f485; margin: 0 1px 0 1px; line-height: 25px; padding-right: 1px; }
.r.head { height: 26px; line-height: 25px; color: #4c4c4c; background: linear-gradient(#ebebeb, #fff 45%); }
.r.head > div { border-right-color: #d4d4d4; display: flex; justify-content: center; overflow: clip; overflow-clip-margin: content-box; }
.r.head > div:last-child { padding-left: 1px; padding-right: 0; }
.vbar { width: 16px; background: linear-gradient(90deg, #dedede, #fff 60%); border-radius: 0 8px 8px 0; padding: 12px 3px; }
.vbar i { width: 9px; height: 40px; border: 1px solid #8f8f8f; border-radius: 5px; background: #d2d2d2; }
.hbar { height: 15px; flex: none; margin: 0 18px 0 2px; background: linear-gradient(#dedede, #fff 60%); border-radius: 8px; padding: 3px 13px; }
.hbar i { width: 459px; height: 9px; border: 1px solid #8f8f8f; border-radius: 5px; background: #d2d2d2; }
.attr-foot { display: flex; padding: 2px 5px 0 6px; gap: 3px; }
.filter-btn { width: 137px; height: 23px; margin-right: auto; border: 1px solid #8f8f8f; border-radius: 3px; background: linear-gradient(#e0e0e0, #c6c6c6); display: flex; align-items: center; padding-left: 4px; gap: 4px; white-space: nowrap; }
.filter-btn svg { width: 15px; height: 16px; }
.filter-btn .arr { margin: 6px 0 0 -8px; }
.view-btn { width: 19px; height: 23px; border: 1px solid #8f8f8f; border-radius: 3px; background: #d8d8d8; display: grid; place-items: center; }
.view-btn svg { width: 14px; height: 14px; }
.view-btn.on { width: 20px; background: #aaa; }
```
FILE: app.js
```js
const E = 'Entire home/apt', P = 'Private room', S = 'Shared room';
const rows = [
['18461891','Bright, comfor...','916092','Connie Mae','Queens','Ditmars Stein...','40.774142288...','-73.916246002...',E],
['20702398','Quiet house o...','1457680','James','Bronx','City Island','40.849190617...','-73.786508890...',P],
['6627449','Large 1 BDRM ...','13886510','Arlene','Bronx','City Island','40.849774569...','-73.786609387...',E],
['19949243','Stay aboard  a ...','1149260','MoMo','Bronx','City Island','40.848837939...','-73.782275872...',E],
['1886820','Quaint City Isl...','9815788','Steve','Bronx','City Island','40.841144160...','-73.783052286...',E],
['5557381','Quaint City Isl...','28811542','Phoebe','Bronx','City Island','40.850023814...','-73.789327594...',P],
['19609887','Sweet Getaway','137892083','Gladis','Bronx','City Island','40.851979551...','-73.789304228...',E],
['7949480','City Island San...','119445','Linda & Didier','Bronx','City Island','40.852053778...','-73.788679634...',P],
['21057372','Relax and unw...','151702414','David','Bronx','City Island','40.842123983...','-73.785196979...',E],
['16042478','WATERFRONT ...','9117975','Collins','Bronx','City Island','40.853491189...','-73.788606593...',P],
['9147025','Cozy City Islan...','403032','Diane','Bronx','City Island','40.844869571...','-73.789540503...',E],
['1936633','Great 1BD wat...','10018391','Alex','Bronx','City Island','40.852582042...','-73.787620984...',E],
['19758402','Autumn getaw...','139415761','Deb','Bronx','City Island','40.853060902...','-73.789481485...',E],
['11675715','Cozy 1 BR Bas...','56714504','Josue','Bronx','City Island','40.851391475...','-73.784138867...',E],
['3400359','Awesome Deal...','16286162','Pat','Bronx','Allerton','40.866769614...','-73.859377929...',P],
['4407790','Retreat Room','16286162','Pat','Bronx','Allerton','40.866819651...','-73.858115944...',P],
['715270','2 Beds/Queen ...','3684360','Enrique','Bronx','Allerton','40.859559279...','-73.870668977...',P],
['18852048','Clean, spaciou...','108922928','Zeeshan','Bronx','Allerton','40.859605076...','-73.863608670...',P],
['759901','GREAT PRICE f...','873273','Christian & Ca...','Bronx','Allerton','40.866330662...','-73.856428493...',P],
['13864221','Live, Love, Sta...','3213737','Vernise','Bronx','Allerton','40.860658567...','-73.854137080...',P],
['12496118','Entire Home i...','11305944','Yahaira','Bronx','Allerton','40.869469115...','-73.859934965...',E],
['13109017','Large Private ...','72871708','Sammy','Bronx','Allerton','40.865212524...','-73.867681027...',P],
['9513511','Beautiful, spac...','49293611','Gloria','Bronx','Allerton','40.857532427...','-73.866054673...',P],
['19174868','Bronx Apartm...','134100451','Vitalis','Bronx','Allerton','40.867588038...','-73.868529712...',S],
['10801360','Studio near BX...','4149899','Salam','Bronx','Allerton','40.859590692...','-73.870066803...',E],
['8294259','Room in Privat...','11305944','Yahaira','Bronx','Allerton','40.867887025...','-73.859993699...',P],
['182177','PRIVATE FLAT ...','873273','Christian & Ca...','Bronx','Allerton','40.864658045...','-73.857087387...',E],
['17876530','Spacious Gard...','11305944','Yahaira','Bronx','Allerton','40.868681759...','-73.854828291...',E],
['5046189','Bellissima!','23732730','Buddy','Bronx','Allerton','40.870540967...','-73.846807088...',E],
['773041','Nice beautiful ...','3684360','Enrique','Bronx','Allerton','40.859137817...','-73.869794219...',P],
['755528','PRIVATE BATH...','3684360','Enrique','Bronx','Allerton','40.858396592...','-73.869685753...',E]
];
const heads = ['id','name','host_id','host_name','neighbourhood_group','neighbourhood','latitude','longitude','room_type'];
const esc = s => s.replace(/&/g, '&amp;').replace(/  /g, ' &nbsp;');
const numeric = [0, 2, 6, 7];
document.getElementById('grid').innerHTML =
  '<div class="r head"><div></div>' + heads.map(h => `<div>${h}</div>`).join('') + '</div>' +
  rows.map((r, i) => `<div class="r${i % 2 ? ' alt' : ''}"><div class="vh">${i + 1}</div>` +
    r.map((c, j) => `<div class="${numeric.includes(j) ? 'num' : ''}${!i && !j ? ' cur' : ''}">${esc(c)}</div>`).join('') + '</div>').join('');

// Listing points: dense neighbourhoods are areas filled with seeded points, outlying ones are listed one by one.
let seed = 20171;
const rnd = () => { seed = (seed * 1664525 + 1013904223) % 4294967296; return seed / 4294967296; };
const hash = (x, y) => { const v = Math.sin(x * 127.1 + y * 311.7) * 43758.5453; return v - Math.floor(v); };
const BLUE = '#2455c9', GREEN = '#54d36f', TAN = '#d8b46b';
const out = [];
const dot = (x, y, c) => out.push(`<circle cx="${x.toFixed(1)}" cy="${y.toFixed(1)}" r="3.4" fill="${c}"/>`);
const inside = (x, y, p) => {
  let k = false;
  for (let i = 0, j = p.length - 1; i < p.length; j = i++) {
    const [a, b] = p[i], [c, d] = p[j];
    if ((b > y) !== (d > y) && x < (c - a) * (y - b) / (d - b) + a) k = !k;
  }
  return k;
};
const edge = (x, y, p) => {
  let m = 1e9;
  for (let i = 0, j = p.length - 1; i < p.length; j = i++) {
    const [a, b] = p[i], [c, d] = p[j];
    const t = Math.max(0, Math.min(1, ((x - a) * (c - a) + (y - b) * (d - b)) / ((c - a) ** 2 + (d - b) ** 2)));
    m = Math.min(m, Math.hypot(x - a - t * (c - a), y - b - t * (d - b)));
  }
  return m;
};
// area(origin y, density per square pixel, share of blue, vertices in thirds of a pixel)
const area = (oy, density, blue, str) => {
  const p = str.split(' ').map(s => { const [x, y] = s.split(',').map(Number); return [760 + x / 3, oy + y / 3]; });
  const xs = p.map(q => q[0]), ys = p.map(q => q[1]);
  const x0 = Math.min(...xs), x1 = Math.max(...xs), y0 = Math.min(...ys), y1 = Math.max(...ys);
  const n = (x1 - x0) * (y1 - y0) * density;
  for (let i = 0; i < n; i++) {
    const x = x0 + rnd() * (x1 - x0), y = y0 + rnd() * (y1 - y0);
    if (!inside(x, y, p) || edge(x, y, p) < 2.6) continue;
    const local = blue + (hash(Math.floor(x / 9), Math.floor(y / 9)) - .5) * .5;
    dot(x, y, rnd() < .01 ? TAN : rnd() < local ? BLUE : GREEN);
  }
};
const D = .16;
area(300, D, .28, '660,-20 600,66 568,145 530,212 490,260 470,320 500,390 540,395 612,385');
area(300, D, .7, '540,250 490,262 450,315 425,355 367,425 340,465 312,510 290,545 380,560 430,490 500,400 545,395 570,300');
area(300, D, .62, '312,510 290,545 257,580 225,635 206,665 204,760 201,800 171,840 160,905 178,928 215,928 300,890 375,882 418,850 430,780 420,720 440,680 395,560 380,550');
area(300, D, .35, '515,410 612,380 612,480 580,480 515,450');
area(300, D, .75, '515,440 590,470 595,540 560,570 520,600 470,640 440,690 415,720 380,640 400,580 435,545 460,510 490,460');
area(300, D, .3, '512,625 522,600 590,560 600,570 545,620');
area(300, D, .45, '490,690 500,665 550,632 612,640 612,700 550,714 510,712');
area(300, D, .5, '483,770 498,715 540,705 562,740 550,765 612,755 612,925 430,920 430,885 438,840 480,800');
area(590, D, .3, '480,60 515,40 525,-20 630,-30 630,400 570,400 535,440 530,480 480,480 440,440 380,425 350,365 380,345 370,270 400,290 440,330 470,310 472,220 480,215');
area(590, D, .78, '287,80 296,38 345,20 390,20 397,58 488,58 492,220 450,217 405,264 385,294 330,292 273,288 273,270 300,240 308,215 270,210 205,216 175,190 167,156 240,175 230,132 262,108');
area(590, D, .85, '372,280 400,270 435,330 432,358 375,350');
area(590, D, .4, '370,60 400,60 430,120 430,190 380,210 360,150');
area(590, .1, .35, '155,365 180,345 230,285 290,270 285,315 322,370 300,390 220,385 190,410 190,460 150,495 120,530 80,550 65,530 70,490 108,450 80,425 100,400 150,395');
area(590, .05, .4, '440,430 600,400 560,480 550,560 550,600 520,650 480,600 430,600 370,545 430,530 420,500');
area(590, .06, .55, '430,660 550,660 605,640 605,700 540,715 550,750 470,755 430,755');
area(590, .02, .4, '540,620 612,500 612,720 560,700');
area(680, .12, .5, '-210,68 -155,62 -134,90 -128,150 -158,190 -200,172 -240,168 -240,118 -200,110');
const plot = (ox, oy, color, str) => str.split(' ').forEach(s => { const [x, y] = s.split(',').map(Number); dot(ox + x / 3, oy + y / 3, color); });
plot(760, 300, BLUE, '58,826 436,508 216,666 355,460 240,635 524,623 186,835 405,840 468,517');
plot(760, 300, TAN, '591,115 535,288 445,390 355,480 535,458 503,590 517,592 547,592 422,674 340,862 345,872 378,868 595,640 455,862 221,898');
plot(760, 590, GREEN, '203,12 204,168 246,157 238,140 88,432 220,463 278,457 300,440 296,405 240,485 260,485 288,485 320,505 316,490 355,490 376,520 380,525 200,550 252,538 245,550 356,541 217,587 318,595 318,603 281,620 368,620 346,631 383,667 346,676 337,682 418,667 425,670 213,738 235,722 262,732 268,744 303,738 307,753 349,722 367,730 407,460 360,362 390,370 268,390 303,425 586,523 581,715 581,640 550,640 508,628 514,649 380,548 396,580 250,404 260,415 240,430');
plot(760, 590, BLUE, '250,85 208,307 82,403 75,417 95,415 60,497 75,543 328,406 367,403 349,370 355,376 241,443 187,514 200,505 238,507 232,492 256,517 276,502 310,498 310,484 187,590 223,602 238,616 214,553 284,540 297,550 276,560 290,573 307,595 320,566 335,634 403,523 382,546 410,594 420,610 426,625 411,631 470,598 229,748 240,731 219,736 328,750 358,738 377,720 583,640 487,661 433,733 472,748 530,740 600,607 566,533 572,455 142,481 180,425');
plot(760, 590, TAN, '588,88 530,124 516,232 591,211 590,271 203,352 130,408 125,397 120,455 73,483 430,427 508,412 566,454 355,495 360,503 427,547 415,568 435,571 495,535 503,535 521,605 526,615 460,670 455,685 505,700 506,715 571,520 580,688 345,0 262,410 54,497');
plot(370, 680, BLUE, '508,160 573,186 589,196 712,177 730,166 742,175 718,199 733,223 766,163 772,181 825,154 701,262 769,273 772,280 802,301 730,298 718,334 902,94 913,121 919,145 895,154 928,97 937,85 949,94 967,82 982,76 990,90 1000,95 1010,80 1006,105 1018,90 970,112 946,132 940,160 1033,121 1024,154 1030,184 1042,196 1042,208 1030,210 1036,226 1006,184 1010,140 980,168 898,214 979,246 925,271 892,286 904,283 901,340 991,307 1003,316 1042,310 967,361 997,385 1018,391 1048,388 1054,352 1075,253 1078,262 1072,277 1078,292 1075,295 1090,355 1090,368 1081,378 1090,382 1073,372 856,445 943,442 958,457 919,475 928,484 913,493 928,508 898,532 679,463 763,496 751,544 634,544 679,574 565,577 642,601 653,601 640,661 514,673 571,724 358,673 256,679 55,829 139,823 132,838');
plot(370, 680, GREEN, '502,121 499,130 574,139 565,178 538,223 631,163 631,172 706,133 721,139 772,166 781,142 790,142 802,151 811,150 820,158 808,157 845,148 859,121 863,124 853,205 892,103 901,127 946,124 934,163 950,148 964,166 966,78 975,90 994,79 979,121 990,127 976,142 985,150 994,157 1000,166 1006,175 994,178 1024,97 1027,106 1018,115 1027,130 1018,145 1024,199 1015,211 961,211 967,222 1018,250 979,256 907,238 889,250 880,253 889,262 1090,256 1097,273 1105,268 1105,304 967,298 958,304 966,303 955,327 1018,334 964,352 985,349 991,355 961,370 922,358 1063,370 1063,406 1054,418 631,273 640,280 655,298 742,308 757,337 556,370 559,376 589,388 595,442 910,487 927,503 544,592 519,602 519,609 553,652 631,637 637,668 427,694 124,886');
document.getElementById('map').innerHTML = out.join('');
```
